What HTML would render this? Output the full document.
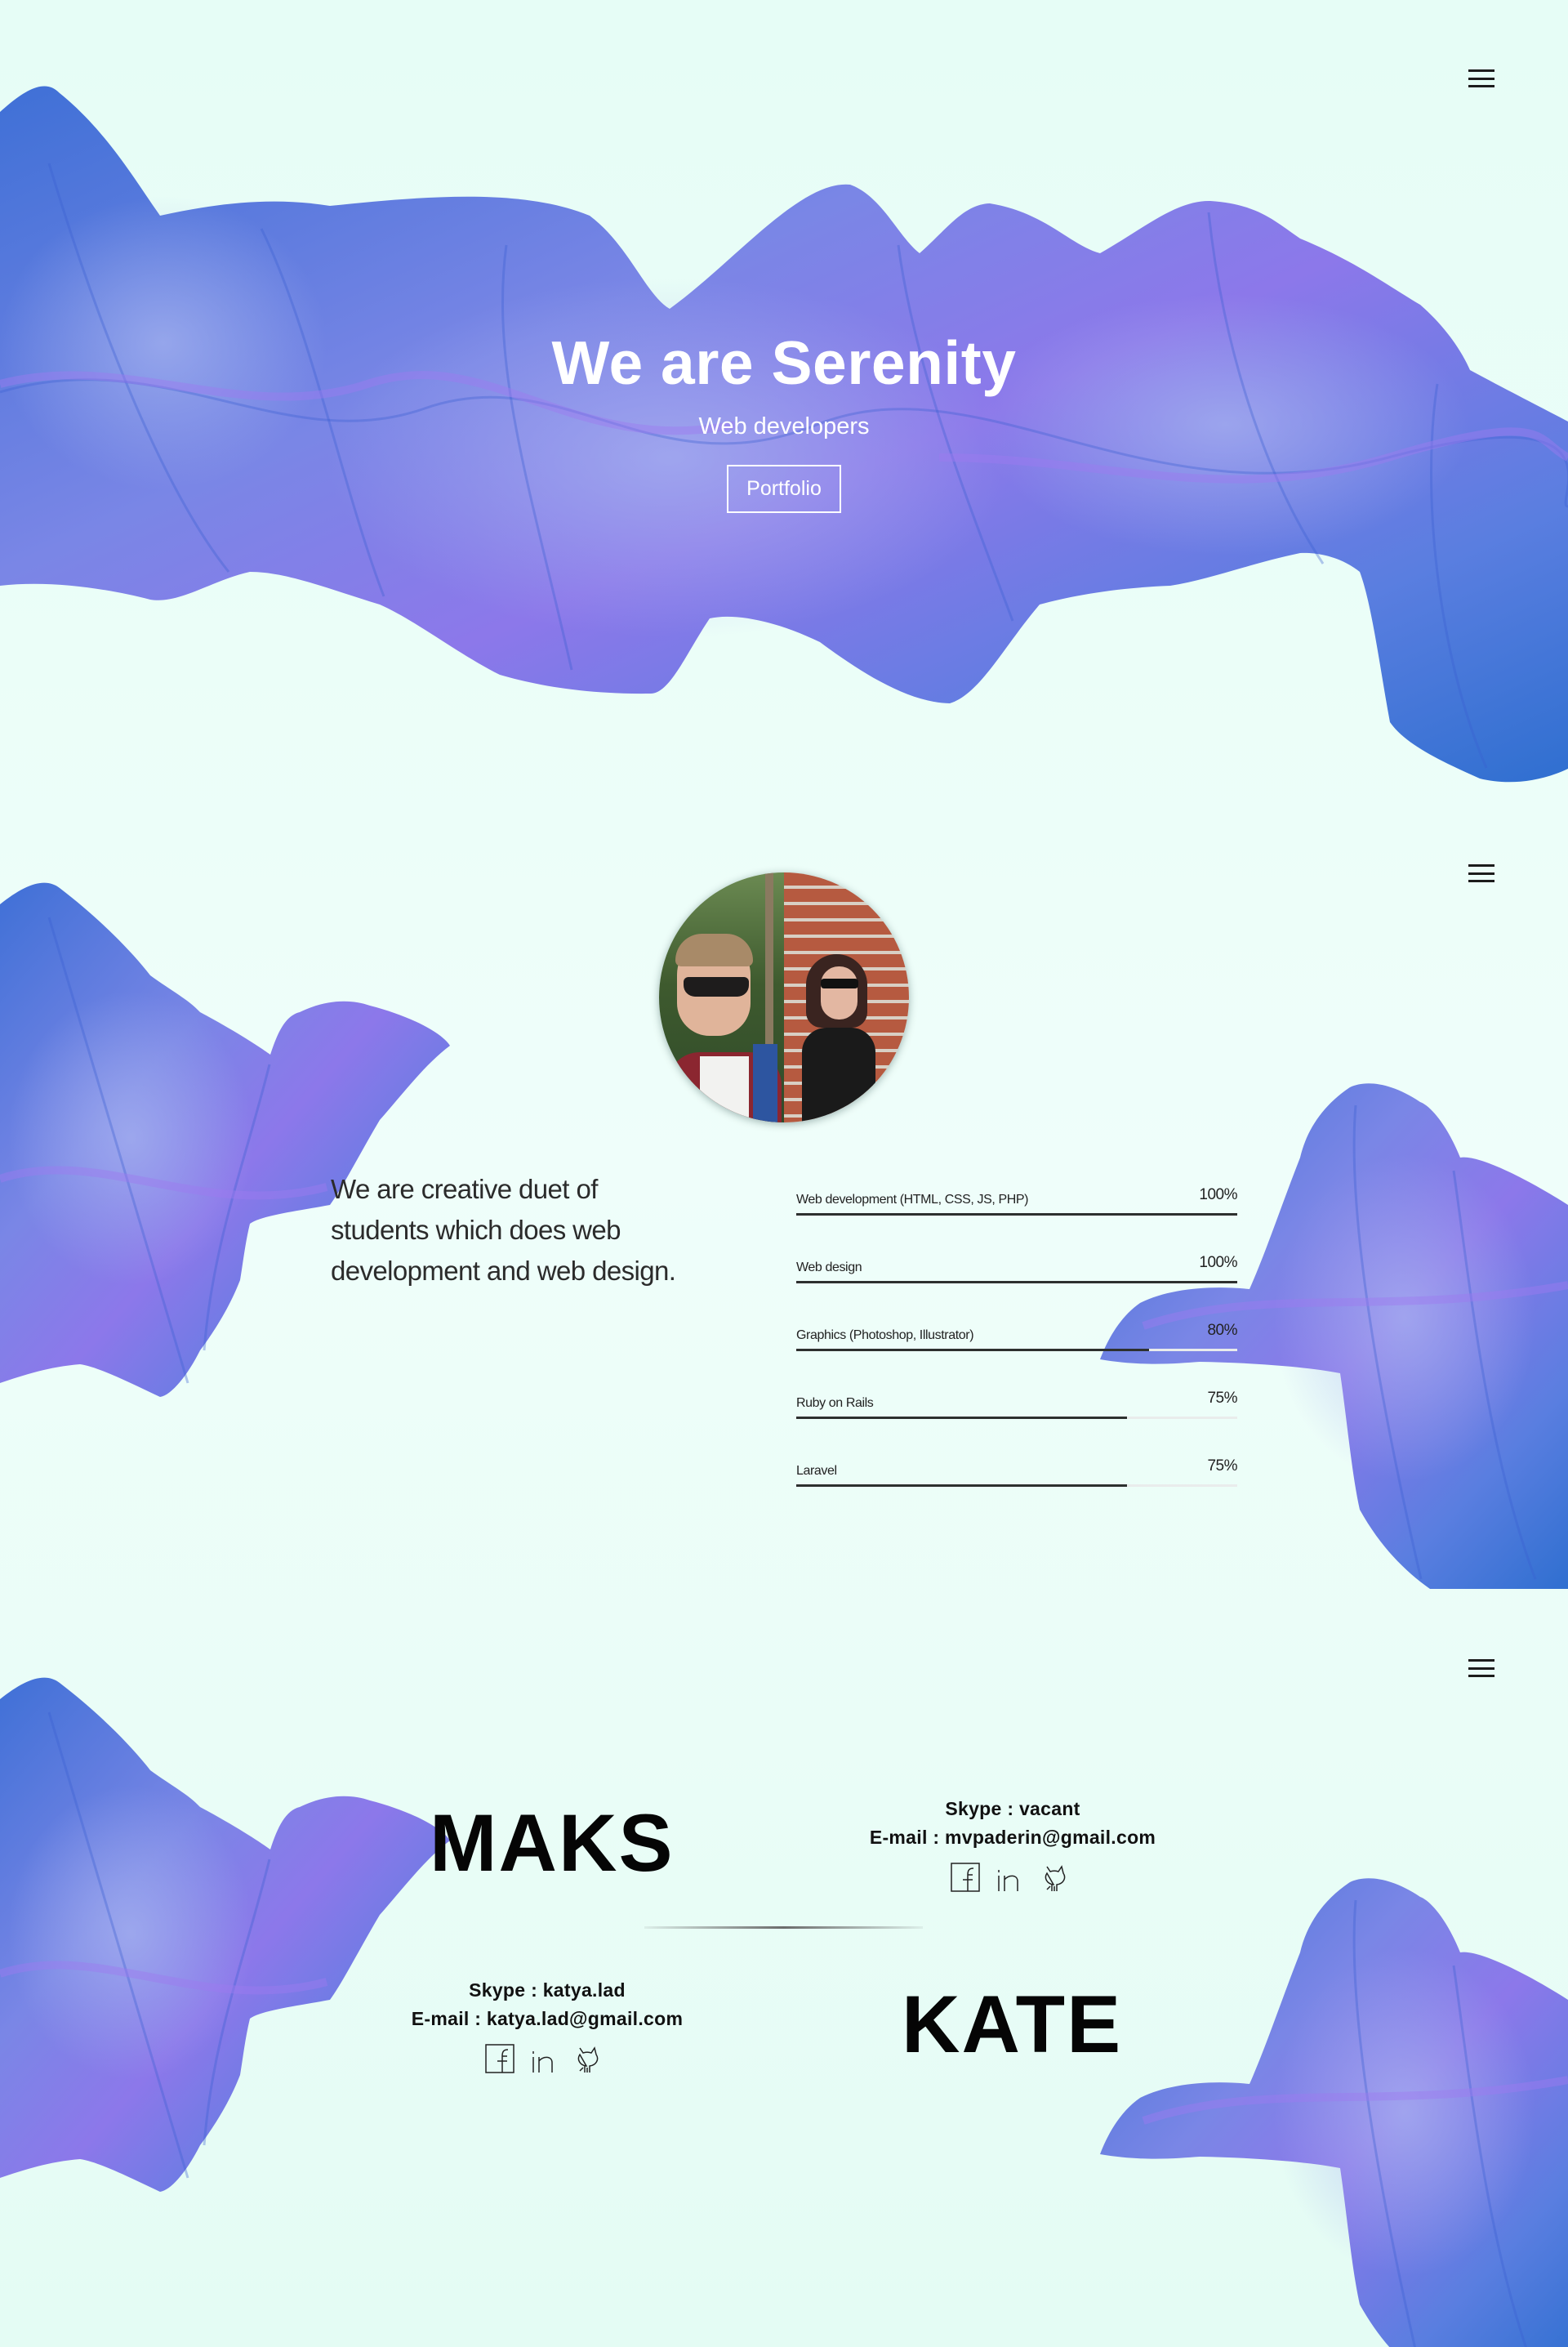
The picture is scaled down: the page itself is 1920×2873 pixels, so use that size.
<!DOCTYPE html>
<html><head><meta charset="utf-8">
<style>
*{margin:0;padding:0;box-sizing:border-box}
html,body{width:1920px;height:2873px;overflow:hidden}
body{position:relative;font-family:"Liberation Sans",sans-serif;background:linear-gradient(180deg,#e6fdf6 0%,#effefa 50%,#e4fcf4 100%);}
.sec{position:absolute;left:0;width:1920px;overflow:hidden}
.sec svg.bg{position:absolute;left:0;top:0}
.ham{position:absolute;left:1798px;width:32px;height:22px}
.ham i{position:absolute;left:0;width:32px;height:2.5px;background:#1c1c1c}
.abs{position:absolute}
.skill{position:absolute;left:975px;width:540px;height:30px}
.skill .lbl{position:absolute;left:0;bottom:10px;font-size:16px;color:#222;letter-spacing:-0.4px}
.skill .pct{position:absolute;right:0;bottom:14px;font-size:19px;color:#222;letter-spacing:-0.5px}
.skill .bar{position:absolute;left:0;bottom:0;width:540px;height:3px;background:#e9ecec}
.skill .bar b{display:block;height:3px;background:#2d302f}
.name{position:absolute;font-weight:bold;font-size:99px;color:#050505;letter-spacing:2px;line-height:1}
.contact{position:absolute;text-align:center;font-weight:bold;font-size:23px;color:#111;line-height:35px;letter-spacing:0.3px}
</style></head><body>
<svg width="0" height="0" style="position:absolute">
<defs>
<linearGradient id="g1" x1="0" y1="0" x2="1" y2="1">
<stop offset="0" stop-color="#3f70d6"/><stop offset="0.35" stop-color="#7a86e6"/><stop offset="0.55" stop-color="#8c78ea"/><stop offset="0.8" stop-color="#5a7ee0"/><stop offset="1" stop-color="#2f6fd0"/>
</linearGradient>
<radialGradient id="r1" cx="0.5" cy="0.5" r="0.5">
<stop offset="0" stop-color="#a9b6f0" stop-opacity="0.7"/><stop offset="1" stop-color="#a9b6f0" stop-opacity="0"/>
</radialGradient>
</defs>
</svg>

<!-- SECTION 1 -->
<div class="sec" style="top:0;height:973px">
<svg class="bg" width="1920" height="973" viewBox="0 0 1920 973">
<path fill="url(#g1)" d="M0,137 C30,110 55,95 73,114 C130,160 165,220 196,264 C260,250 330,240 404,252 C520,240 640,230 722,264 C770,300 790,360 820,378 C900,320 980,220 1041,226 C1080,240 1100,290 1126,310 C1160,280 1180,250 1212,249 C1280,260 1310,300 1347,310 C1400,280 1440,245 1482,246 C1540,250 1560,270 1592,292 C1660,320 1700,350 1739,373 C1770,400 1790,430 1800,453 C1850,480 1890,500 1920,516 L1920,941 C1880,960 1840,960 1812,953 C1760,930 1720,910 1702,884 C1690,820 1680,740 1665,700 C1640,680 1610,676 1592,677 C1530,690 1480,710 1433,717 C1360,720 1310,730 1273,740 C1230,790 1200,850 1163,861 C1110,860 1050,820 1004,786 C950,760 900,750 869,757 C840,800 820,850 796,849 C720,850 660,840 612,826 C560,800 510,760 465,740 C400,720 350,700 306,700 C260,710 220,740 184,734 C130,720 60,710 0,717 Z"/>
<ellipse cx="820" cy="560" rx="420" ry="220" fill="url(#r1)"/>
<ellipse cx="1500" cy="520" rx="300" ry="160" fill="url(#r1)"/>
<ellipse cx="200" cy="420" rx="200" ry="180" fill="url(#r1)"/>
<g fill="none" stroke="#3a5fd0" stroke-opacity="0.35" stroke-width="3">
<path d="M0,480 C200,420 350,560 520,500 S800,600 1000,520 S1400,640 1700,560 S1900,620 1920,620"/>
<path d="M60,200 C120,400 200,600 280,700"/>
<path d="M620,300 C600,450 650,600 700,820"/>
<path d="M1100,300 C1120,450 1180,600 1240,760"/>
<path d="M1480,260 C1500,450 1560,600 1620,690"/>
<path d="M1760,470 C1740,600 1760,800 1820,940"/>
<path d="M320,280 C380,400 420,600 470,730"/>
</g>
<g fill="none" stroke="#9d7bf0" stroke-opacity="0.45" stroke-width="10">
<path d="M0,470 C150,430 300,520 450,470 S700,560 900,520"/>
<path d="M1150,560 C1350,560 1500,620 1700,560 S1880,540 1920,560"/>
</g>
</svg>
<div class="ham" style="top:85px"><i style="top:0"></i><i style="top:10px"></i><i style="top:19px"></i></div>
<div class="abs" style="left:0;width:1920px;top:396px;text-align:center;color:#fff;font-weight:bold;font-size:75px;letter-spacing:0.5px;line-height:96px">We are Serenity</div>
<div class="abs" style="left:0;width:1920px;top:502px;text-align:center;color:#fff;font-size:29px;line-height:40px">Web developers</div>
<div class="abs" style="left:890px;top:569px;width:140px;height:59px;border:2px solid #fff;color:#fff;font-size:25px;line-height:55px;text-align:center">Portfolio</div>
</div>

<!-- SECTION 2 -->
<div class="sec" style="top:973px;height:973px">
<svg class="bg" width="1920" height="973" viewBox="0 0 1920 973">
<path fill="url(#g1)" d="M0,134 C30,110 55,100 73,114 C120,150 160,190 184,221 C210,240 230,250 245,266 C290,290 320,310 331,318 C340,290 350,270 367,266 C400,250 430,250 453,258 C500,270 540,290 551,307 C520,330 490,370 465,398 C440,440 420,480 404,502 C360,510 320,515 306,525 C300,550 298,570 294,594 C280,630 260,660 245,680 C230,710 210,735 196,737 C160,720 120,700 98,697 C60,700 30,710 0,720 Z"/>
<path fill="url(#g1)" d="M1920,502 C1870,470 1810,440 1788,444 C1770,400 1750,380 1739,376 C1700,350 1670,350 1653,358 C1620,380 1600,410 1592,444 C1570,500 1550,560 1530,605 C1480,600 1430,605 1396,622 C1370,640 1355,670 1347,691 C1400,700 1440,696 1469,694 C1530,695 1600,700 1641,708 C1650,770 1655,830 1665,875 C1690,920 1720,950 1751,972 L1920,972 Z"/>
<ellipse cx="160" cy="420" rx="150" ry="180" fill="url(#r1)"/>
<ellipse cx="1720" cy="640" rx="160" ry="200" fill="url(#r1)"/>
<g fill="none" stroke="#3a5fd0" stroke-opacity="0.35" stroke-width="3">
<path d="M60,150 C120,350 180,550 230,720"/><path d="M330,330 C300,450 260,550 250,680"/>
<path d="M1660,380 C1650,500 1680,700 1740,960"/><path d="M1780,460 C1800,600 1820,800 1880,960"/>
</g>
<g fill="none" stroke="#9d7bf0" stroke-opacity="0.45" stroke-width="10">
<path d="M0,470 C120,430 250,520 400,480"/><path d="M1400,650 C1550,600 1700,640 1920,600"/>
</g>
</svg>
<div class="ham" style="top:85px"><i style="top:0"></i><i style="top:10px"></i><i style="top:19px"></i></div>
<div class="abs" style="left:807px;top:95px;width:306px;height:306px;border-radius:50%;overflow:hidden;box-shadow:0 2px 10px rgba(0,40,40,.35)">
<div class="abs" style="left:0;top:0;width:153px;height:306px;background:linear-gradient(180deg,#6b8a52 0%,#3e5a2e 45%,#2f4a2a 100%)"></div>
<div class="abs" style="left:130px;top:0;width:10px;height:230px;background:#8a7a60"></div>
<div class="abs" style="left:153px;top:0;width:153px;height:306px;background:repeating-linear-gradient(180deg,#b65a40 0 16px,#d8cfc4 16px 20px)"></div>
<div class="abs" style="left:10px;top:220px;width:140px;height:100px;background:#8b2630;border-radius:40px 40px 0 0"></div>
<div class="abs" style="left:50px;top:225px;width:60px;height:90px;background:#f2f2f0"></div>
<div class="abs" style="left:115px;top:210px;width:30px;height:100px;background:#2d55a0"></div>
<div class="abs" style="left:22px;top:80px;width:90px;height:120px;background:#e0b49a;border-radius:45px 45px 40px 40px"></div>
<div class="abs" style="left:20px;top:75px;width:95px;height:40px;background:#a88a68;border-radius:45px 45px 10px 10px"></div>
<div class="abs" style="left:30px;top:128px;width:80px;height:24px;background:#1e1c1c;border-radius:6px 6px 14px 14px"></div>
<div class="abs" style="left:180px;top:100px;width:75px;height:90px;background:#3a2420;border-radius:40px 40px 20px 20px"></div>
<div class="abs" style="left:198px;top:115px;width:45px;height:65px;background:#e3b7a2;border-radius:22px"></div>
<div class="abs" style="left:198px;top:130px;width:46px;height:12px;background:#111;border-radius:4px"></div>
<div class="abs" style="left:175px;top:190px;width:90px;height:120px;background:#1a1a1a;border-radius:30px 30px 0 0"></div>
</div>
<div class="abs" style="left:405px;top:458px;width:560px;font-size:33px;line-height:50px;color:#2b2b2b;letter-spacing:-0.6px;white-space:nowrap">We are creative duet of<br>students which does web<br>development and web design.</div>
<div class="skill" style="top:485px"><span class="lbl">Web development (HTML, CSS, JS, PHP)</span><span class="pct">100%</span><div class="bar"><b style="width:100%"></b></div></div>
<div class="skill" style="top:568px"><span class="lbl">Web design</span><span class="pct">100%</span><div class="bar"><b style="width:100%"></b></div></div>
<div class="skill" style="top:651px"><span class="lbl">Graphics (Photoshop, Illustrator)</span><span class="pct">80%</span><div class="bar"><b style="width:80%"></b></div></div>
<div class="skill" style="top:734px"><span class="lbl">Ruby on Rails</span><span class="pct">75%</span><div class="bar"><b style="width:75%"></b></div></div>
<div class="skill" style="top:817px"><span class="lbl">Laravel</span><span class="pct">75%</span><div class="bar"><b style="width:75%"></b></div></div>
</div>

<!-- SECTION 3 -->
<div class="sec" style="top:1946px;height:927px">
<svg class="bg" width="1920" height="973" viewBox="0 0 1920 973">
<path fill="url(#g1)" d="M0,134 C30,110 55,100 73,114 C120,150 160,190 184,221 C210,240 230,250 245,266 C290,290 320,310 331,318 C340,290 350,270 367,266 C400,250 430,250 453,258 C500,270 540,290 551,307 C520,330 490,370 465,398 C440,440 420,480 404,502 C360,510 320,515 306,525 C300,550 298,570 294,594 C280,630 260,660 245,680 C230,710 210,735 196,737 C160,720 120,700 98,697 C60,700 30,710 0,720 Z"/>
<path fill="url(#g1)" d="M1920,502 C1870,470 1810,440 1788,444 C1770,400 1750,380 1739,376 C1700,350 1670,350 1653,358 C1620,380 1600,410 1592,444 C1570,500 1550,560 1530,605 C1480,600 1430,605 1396,622 C1370,640 1355,670 1347,691 C1400,700 1440,696 1469,694 C1530,695 1600,700 1641,708 C1650,770 1655,830 1665,875 C1690,920 1720,950 1751,972 L1920,972 Z"/>
<ellipse cx="160" cy="420" rx="150" ry="180" fill="url(#r1)"/>
<ellipse cx="1720" cy="640" rx="160" ry="200" fill="url(#r1)"/>
<g fill="none" stroke="#3a5fd0" stroke-opacity="0.35" stroke-width="3">
<path d="M60,150 C120,350 180,550 230,720"/><path d="M330,330 C300,450 260,550 250,680"/>
<path d="M1660,380 C1650,500 1680,700 1740,960"/><path d="M1780,460 C1800,600 1820,800 1880,960"/>
</g>
<g fill="none" stroke="#9d7bf0" stroke-opacity="0.45" stroke-width="10">
<path d="M0,470 C120,430 250,520 400,480"/><path d="M1400,650 C1550,600 1700,640 1920,600"/>
</g>
</svg>
<div class="ham" style="top:85px"><i style="top:0"></i><i style="top:10px"></i><i style="top:19px"></i></div>
<div class="name" style="left:526px;top:260px">MAKS</div>
<div class="contact" style="left:1040px;width:400px;top:251px">Skype : vacant<br>E-mail : mvpaderin@gmail.com</div>
<svg class="abs" style="left:1160px;top:333px" width="160" height="40" viewBox="0 0 160 40">
<g fill="none" stroke="#222" stroke-width="1.5">
<rect x="5" y="2" width="34" height="34"/><path d="M25,36 V16 H31 M19,22 H31 M25,16 C25,10 27,8 32,8"/>
<path d="M63,10 v3 M63,17 v19 M70,36 V17 M70,22 C74,16 86,15 86,24 V36"/>
<path d="M122,6 L126,12 C129,11 133,11 136,12 L140,6 L142,14 C146,20 142,27 134,28 L134,36 M130,28 C122,27 118,20 122,14 Z M128,28 L128,36 M131,30 L131,36 M126,30 L122,34"/>
</g></svg>
<div class="abs" style="left:789px;top:412px;width:341px;height:3px;background:linear-gradient(90deg,rgba(120,120,120,.1),#6b6b6b 50%,rgba(120,120,120,.1))"></div>
<div class="contact" style="left:470px;width:400px;top:473px">Skype : katya.lad<br>E-mail : katya.lad@gmail.com</div>
<svg class="abs" style="left:590px;top:555px" width="160" height="40" viewBox="0 0 160 40">
<g fill="none" stroke="#222" stroke-width="1.5">
<rect x="5" y="2" width="34" height="34"/><path d="M25,36 V16 H31 M19,22 H31 M25,16 C25,10 27,8 32,8"/>
<path d="M63,10 v3 M63,17 v19 M70,36 V17 M70,22 C74,16 86,15 86,24 V36"/>
<path d="M120,6 L124,12 C127,11 131,11 134,12 L138,6 L140,14 C144,20 140,27 132,28 L132,36 M128,28 C120,27 116,20 120,14 Z M126,28 L126,36 M129,30 L129,36 M124,30 L120,34"/>
</g></svg>
<div class="name" style="left:1104px;top:482px">KATE</div>
</div>
</body></html>
